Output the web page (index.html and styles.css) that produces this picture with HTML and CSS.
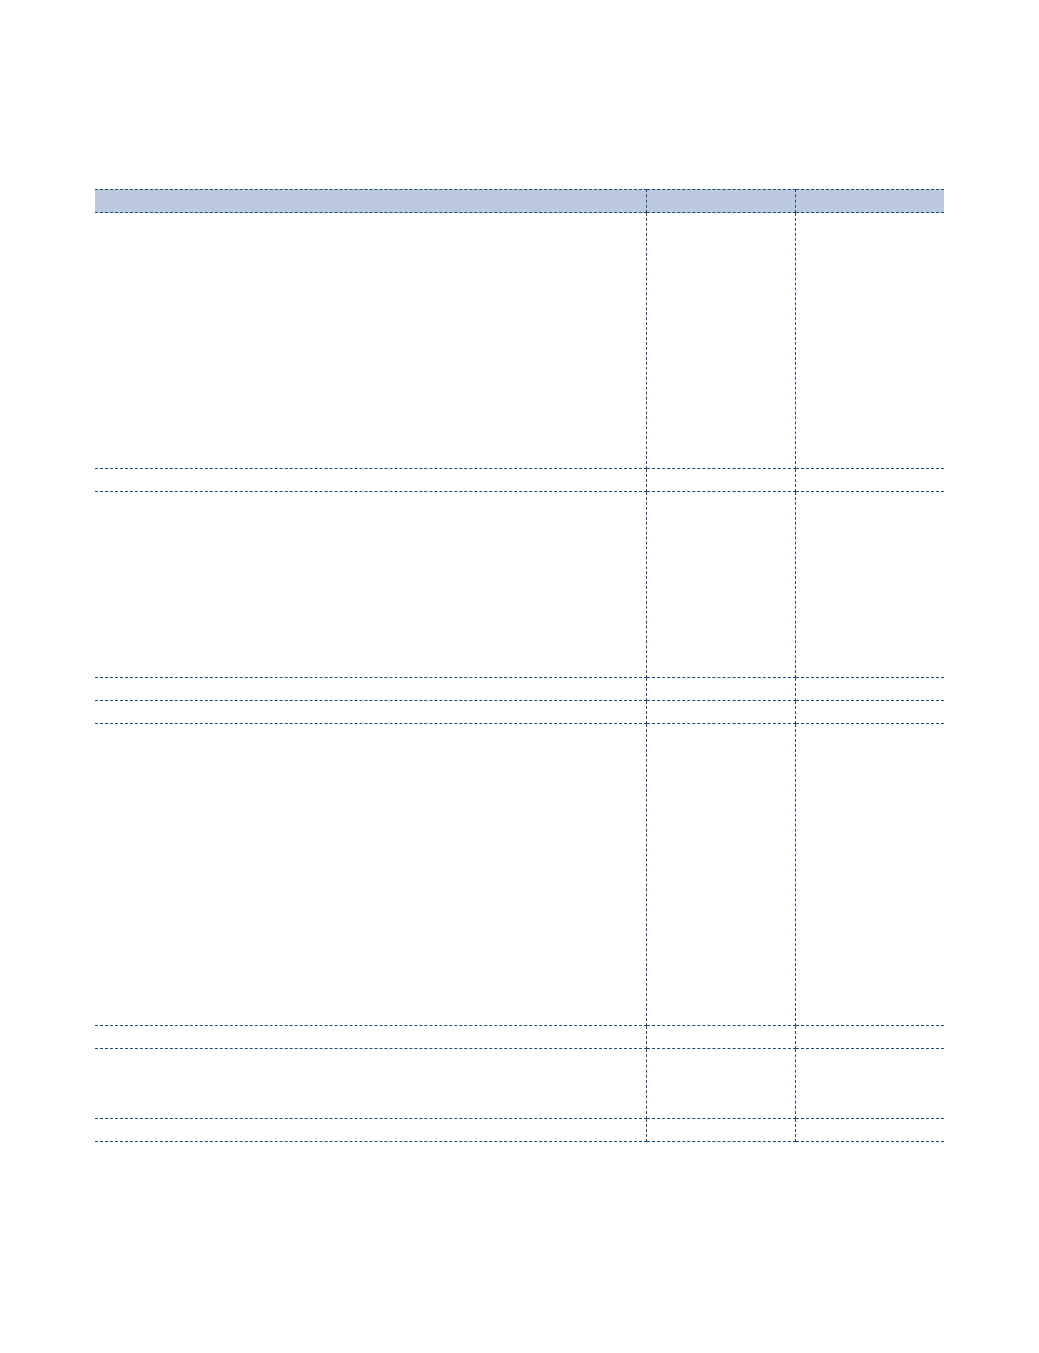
FILE: index.html
```html
<!DOCTYPE html>
<html lang="en">
<head>
<meta charset="utf-8">
<title>Table</title>
<link rel="stylesheet" href="styles.css">
</head>
<body>
<div class="page">
  <div class="grid">
    <div class="cell head top"></div><div class="cell head top"></div><div class="cell head top last"></div>
    <div class="cell r1"></div><div class="cell r1"></div><div class="cell r1 last"></div>
    <div class="cell rs"></div><div class="cell rs"></div><div class="cell rs last"></div>
    <div class="cell r3"></div><div class="cell r3"></div><div class="cell r3 last"></div>
    <div class="cell rs"></div><div class="cell rs"></div><div class="cell rs last"></div>
    <div class="cell rs"></div><div class="cell rs"></div><div class="cell rs last"></div>
    <div class="cell r6"></div><div class="cell r6"></div><div class="cell r6 last"></div>
    <div class="cell rs"></div><div class="cell rs"></div><div class="cell rs last"></div>
    <div class="cell r8"></div><div class="cell r8"></div><div class="cell r8 last"></div>
    <div class="cell rs"></div><div class="cell rs"></div><div class="cell rs last"></div>
  </div>
</div>
</body>
</html>
```

FILE: styles.css
```css
html, body {
  margin: 0;
  padding: 0;
  background: #ffffff;
  font-family: "Liberation Sans", Arial, sans-serif;
}
.page {
  padding: 189px 0 0 95px;
}
.grid {
  display: grid;
  grid-template-columns: 552px 149px 148px;
  width: 849px;
}
.cell {
  box-sizing: border-box;
  border-bottom: 1px dashed #1f4e79;
  border-right: 1px dashed #1f4e79;
}
.cell.last {
  border-right: none;
}
.top {
  border-top: 1px dashed #1f4e79;
}
.head {
  background: #bdc9de;
  height: 24px;
}
.rs { height: 23px; }
.r1 { height: 256px; }
.r3 { height: 186px; }
.r6 { height: 302px; }
.r8 { height: 70px; }
```
